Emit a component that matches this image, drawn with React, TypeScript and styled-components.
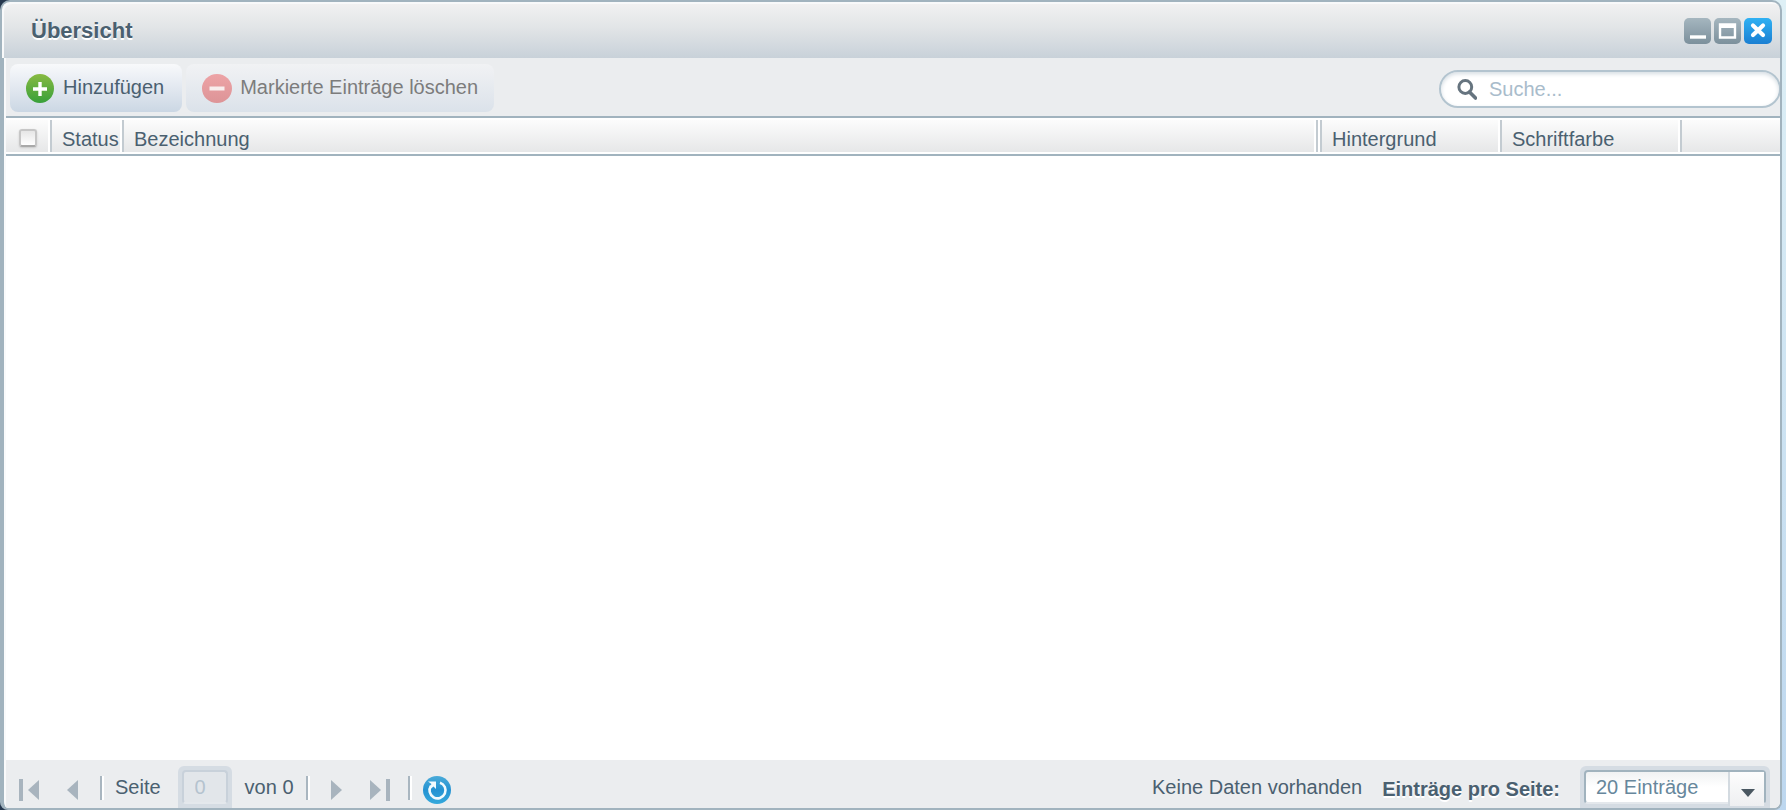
import React from "react";
import styled, { createGlobalStyle, css } from "styled-components";

const line = "#a1b3be";
const ink = "#4a6070";

const GlobalStyle = createGlobalStyle`
  *, *::before, *::after { box-sizing: border-box; }
  body {
    margin: 0;
    background: linear-gradient(to right, #26384e 0 50%, transparent 50%),
      linear-gradient(to bottom, #def0f6, #bdd7ef);
    font: 20px/24px "Liberation Sans", Arial, sans-serif;
    color: ${ink};
  }
  button, input, select { font: inherit; color: inherit; margin: 0; }
`;

const Window = styled.main`
  display: flex;
  flex-direction: column;
  min-height: 100vh;
  margin-right: 4px;
`;

const TitleBar = styled.header`
  display: flex;
  align-items: flex-start;
  justify-content: space-between;
  height: 58px;
  padding: 16px 8px 0 29px;
  border: 2px solid ${line};
  border-bottom: 0;
  border-radius: 10px 10px 0 0;
  background: linear-gradient(#f2f2f2, #e2e5e7 45%, #c8d1d9);
  box-shadow: inset 2px 2px 0 #f8f9fa;
`;

const Title = styled.h1`
  margin: 0;
  font-size: 22px;
  line-height: 26px;
  text-shadow: 0 2px 0 #fff;
`;

const WindowTools = styled.div`
  display: flex;
  gap: 3px;
`;

const ToolButton = styled.button<{ $close?: boolean }>`
  display: flex;
  width: ${(p) => (p.$close ? 28 : 27)}px;
  height: 26px;
  padding: 0;
  border: 0;
  border-radius: 5px;
  align-items: center;
  justify-content: center;
  background: ${(p) =>
    p.$close
      ? "linear-gradient(#2fb1f3, #1a7fd2)"
      : "linear-gradient(#a5b6bf, #7c909c)"};
`;

const Body = styled.div`
  flex: 1;
  display: flex;
  flex-direction: column;
  padding-left: 2px;
  border: 2px solid ${line};
  border-top: 0;
  border-left-width: 4px;
  border-radius: 0 0 8px 8px;
  background: #f9fafb;
  overflow: hidden;
`;

const Toolbar = styled.div`
  display: flex;
  align-items: flex-start;
  gap: 4px;
  height: 58px;
  padding: 6px 0 0 4px;
  background: #ebedef;
`;

const ActionButton = styled.button`
  display: flex;
  align-items: center;
  gap: 9px;
  height: 48px;
  padding: 0 18px 0 16px;
  border: 0;
  border-radius: 8px;
  background: linear-gradient(#f8f9fb, #e2e8f0 50%, #cbd7e4);
  white-space: nowrap;

  span { padding-bottom: 2px; }

  &:disabled {
    padding-right: 16px;
    gap: 8px;
    color: #7c7c7c;
    background: linear-gradient(#f1f2f4, #e6eaef 50%, #dbe2ea);
  }
`;

const SearchBox = styled.label`
  display: flex;
  align-items: center;
  gap: 12px;
  width: 342px;
  height: 38px;
  margin: 6px -1px 0 auto;
  padding: 0 16px;
  border: 2px solid #b3c4cf;
  border-radius: 19px;
  background: #fff;
  box-shadow: inset 0 2px 4px #d5dde3;
`;

const SearchInput = styled.input`
  flex: 1;
  min-width: 0;
  padding: 0;
  border: 0;
  outline: 0;
  background: transparent;
  &::placeholder { color: #a9bccb; opacity: 1; }
`;

const Grid = styled.div`
  flex: 1;
  background: #fff;
`;

const Table = styled.table`
  width: 100%;
  table-layout: fixed;
  border-collapse: separate;
  border-spacing: 0;
  border: 2px solid ${line};
  border-width: 2px 0;
  padding: 2px 0;
  background: #fff;
`;

const HeadCell = styled.th<{ $first?: boolean; $last?: boolean }>`
  height: 32px;
  padding: 7px 0 1px 10px;
  border: solid;
  border-width: 0 2px;
  border-color: #fff #fff #fff #c3cbd1;
  background: linear-gradient(#fcfcfc, #e6e7e8);
  background-clip: padding-box;
  font-weight: normal;
  text-align: left;
  white-space: nowrap;
  ${(p) =>
    p.$first &&
    css`
      border-left: 0;
      padding: 4px 0 0 13px;
    `}
  ${(p) => p.$last && css`border-right: 0;`}
`;

const SpacerCell = styled.td`
  padding: 0;
  border: solid;
  border-width: 0 2px;
  border-color: #fff #fff #fff #c3cbd1;
`;

const Col = styled.col<{ $w?: number }>`
  ${(p) => p.$w && css`width: ${p.$w}px;`}
`;

const Check = styled.input`
  appearance: none;
  display: block;
  width: 18px;
  height: 18px;
  border: 2px solid #c6c6c6;
  border-bottom-color: #a9a9a9;
  border-radius: 3px;
  background: linear-gradient(#e6e6e6, #fff);
  box-shadow: 0 1px 2px #c8c8c8;
`;

const Footer = styled.footer`
  display: flex;
  align-items: center;
  gap: 11px;
  height: 48px;
  padding: 0 10px 0 7px;
  background: #ebedef;
  white-space: nowrap;
`;

const NavButton = styled.button<{ $size: number }>`
  display: flex;
  width: ${(p) => p.$size}px;
  height: 28px;
  margin-top: 12px;
  padding: 0;
  border: 0;
  align-items: center;
  justify-content: center;
  background: transparent;
`;

const Divider = styled.span`
  width: 4px;
  height: 24px;
  border-left: 2px solid #a9b6c0;
  border-right: 2px solid #fff;
  margin: 8px 0 0 1px;
`;

const FooterText = styled.span`
  padding-top: 6px;
`;

const frame = css`
  height: 42px;
  padding: 4px 4px 2px;
  border-radius: 6px 6px 0 0;
  background: #d5dce3;
  align-self: flex-end;
`;

const PageBox = styled.span`
  ${frame}
  width: 54px;
  margin: 0 2px 0 6px;
`;

const PageInput = styled.input`
  display: block;
  width: 46px;
  height: 34px;
  padding: 0 0 0 11px;
  border: 2px solid #c8d1da;
  border-bottom-color: #e4e8ec;
  border-radius: 4px;
  background: #e2e6ea;
  outline: 0;
  &:disabled { color: #b5c3cf; }
`;

const Paging = styled.div`
  display: flex;
  align-items: center;
  gap: 20px;
  height: 48px;
  margin-left: auto;
`;

const PageSizeLabel = styled.label`
  padding-top: 10px;
  font-weight: bold;
  text-shadow: 0 2px 0 #fff;
`;

const SelectFrame = styled.span`
  ${frame}
  position: relative;
  width: 190px;
`;

const Select = styled.select`
  appearance: none;
  display: block;
  width: 100%;
  height: 34px;
  padding: 0 40px 0 10px;
  border: 2px solid ${line};
  border-bottom-color: #e4e8ec;
  border-radius: 4px;
  background: linear-gradient(#f0f2f3, #fff 50%);
  color: #67879c;
  outline: 0;
`;

const Trigger = styled.span`
  position: absolute;
  top: 6px;
  right: 6px;
  display: flex;
  width: 36px;
  height: 34px;
  padding: 17px 0 0 11px;
  border-left: 2px solid #d3dae0;
  background: linear-gradient(#fdfdfd, #eeeff1);
  pointer-events: none;
`;

function AddIcon() {
  return (
    <svg width="28" height="29" viewBox="0 0 28 29">
      <defs>
        <linearGradient id="add" x2="0" y2="1">
          <stop stopColor="#88ba42" />
          <stop offset="1" stopColor="#38a03a" />
        </linearGradient>
      </defs>
      <ellipse cx="14" cy="14.5" rx="14" ry="14.5" fill="url(#add)" />
      <path d="M14 8v14M7 15h14" stroke="#fff" strokeWidth="3.4" />
    </svg>
  );
}

function RemoveIcon() {
  return (
    <svg width="30" height="29" viewBox="0 0 30 29">
      <defs>
        <linearGradient id="remove" x2="0" y2="1">
          <stop stopColor="#eda3a6" />
          <stop offset="1" stopColor="#dd9497" />
        </linearGradient>
      </defs>
      <ellipse cx="15" cy="14.5" rx="15" ry="14.5" fill="url(#remove)" />
      <path d="M7.5 14.5h15" stroke="#f8eded" strokeWidth="4" />
    </svg>
  );
}

function SearchIcon() {
  return (
    <svg width="20" height="21" viewBox="0 0 20 21">
      <circle cx="8.3" cy="8" r="6.4" fill="none" stroke="#66747f" strokeWidth="3" />
      <path d="M12.5 13l6 6" stroke="#66747f" strokeWidth="3.6" strokeLinecap="round" />
    </svg>
  );
}

function MinimizeIcon() {
  return (
    <svg width="26" height="26" viewBox="0 0 26 26">
      <path d="M5 19h16" stroke="#fff" strokeWidth="3.4" />
    </svg>
  );
}

function MaximizeIcon() {
  return (
    <svg width="28" height="26" viewBox="0 0 28 26">
      <path d="M5 5h18v16H5zM7.5 10v8.500h13v-8.500z" fill="#fff" fillRule="evenodd" />
    </svg>
  );
}

function CloseIcon() {
  return (
    <svg width="28" height="26" viewBox="0 0 28 26">
      <path d="M9 7.500l10 9.500M19 7.500L9 17" stroke="#fff" strokeWidth="4.2" strokeLinecap="round" />
    </svg>
  );
}

function ArrowIcon({ back, bar }: { back?: boolean; bar?: boolean }) {
  const width = bar ? 20 : 11;
  return (
    <svg width={width} height="22" viewBox={`0 0 ${width} 22`}>
      <g fill="#a8b4be" transform={back ? `translate(${width} 0) scale(-1 1)` : undefined}>
        <path d="M0 1l11 10L0 21z" />
        {bar && <path d="M16 0h4v22h-4z" />}
      </g>
    </svg>
  );
}

function ReloadIcon() {
  return (
    <svg width="28" height="28" viewBox="0 0 28 28">
      <defs>
        <linearGradient id="reload" x2="0" y2="1">
          <stop stopColor="#4aabd9" />
          <stop offset="0.5" stopColor="#2492d2" />
          <stop offset="1" stopColor="#35a9dc" />
        </linearGradient>
      </defs>
      <circle cx="14" cy="14" r="14" fill="url(#reload)" />
      <path d="M17 6.700a8 8 0 1 1-9 3" fill="none" stroke="#f2fafd" strokeWidth="2.600" />
      <path d="M5 5.500h8v7.500l-2.500-2.500-3 2.500-1.500-1.500 2.500-3.500z" fill="#f2fafd" />
    </svg>
  );
}

export default function App() {
  return (
    <>
      <GlobalStyle />
      <Window>
        <TitleBar>
          <Title>Übersicht</Title>
          <WindowTools>
            <ToolButton aria-label="Minimieren"><MinimizeIcon /></ToolButton>
            <ToolButton aria-label="Maximieren"><MaximizeIcon /></ToolButton>
            <ToolButton $close aria-label="Schließen"><CloseIcon /></ToolButton>
          </WindowTools>
        </TitleBar>
        <Body>
          <Toolbar>
            <ActionButton><AddIcon /><span>Hinzufügen</span></ActionButton>
            <ActionButton disabled><RemoveIcon /><span>Markierte Einträge löschen</span></ActionButton>
            <SearchBox>
              <SearchIcon />
              <SearchInput type="text" placeholder="Suche..." aria-label="Suche" />
            </SearchBox>
          </Toolbar>
          <Grid>
            <Table>
              <colgroup>
                <Col $w={44} />
                <Col $w={72} />
                <Col />
                <Col $w={4} />
                <Col $w={180} />
                <Col $w={180} />
                <Col $w={100} />
              </colgroup>
              <thead>
                <tr>
                  <HeadCell $first><Check type="checkbox" aria-label="Alle markieren" /></HeadCell>
                  <HeadCell>Status</HeadCell>
                  <HeadCell>Bezeichnung</HeadCell>
                  <SpacerCell />
                  <HeadCell>Hintergrund</HeadCell>
                  <HeadCell>Schriftfarbe</HeadCell>
                  <HeadCell $last />
                </tr>
              </thead>
            </Table>
          </Grid>
          <Footer>
            <NavButton $size={32} disabled aria-label="Erste Seite"><ArrowIcon back bar /></NavButton>
            <NavButton $size={32} disabled aria-label="Vorherige Seite"><ArrowIcon back /></NavButton>
            <Divider />
            <FooterText as="label" htmlFor="page">Seite</FooterText>
            <PageBox><PageInput id="page" type="text" defaultValue="0" disabled /></PageBox>
            <FooterText>von 0</FooterText>
            <Divider />
            <NavButton $size={32} disabled aria-label="Nächste Seite"><ArrowIcon /></NavButton>
            <NavButton $size={32} disabled aria-label="Letzte Seite"><ArrowIcon bar /></NavButton>
            <Divider />
            <NavButton $size={28} aria-label="Aktualisieren"><ReloadIcon /></NavButton>
            <Paging>
              <FooterText>Keine Daten vorhanden</FooterText>
              <PageSizeLabel htmlFor="page-size">Einträge pro Seite:</PageSizeLabel>
              <SelectFrame>
                <Select id="page-size" defaultValue="20">
                  <option value="20">20 Einträge</option>
                  <option value="50">50 Einträge</option>
                </Select>
                <Trigger>
                  <svg width="14" height="8" viewBox="0 0 14 8">
                    <path d="M0 0h14L7 8z" fill="#4a5761" />
                  </svg>
                </Trigger>
              </SelectFrame>
            </Paging>
          </Footer>
        </Body>
      </Window>
    </>
  );
}
